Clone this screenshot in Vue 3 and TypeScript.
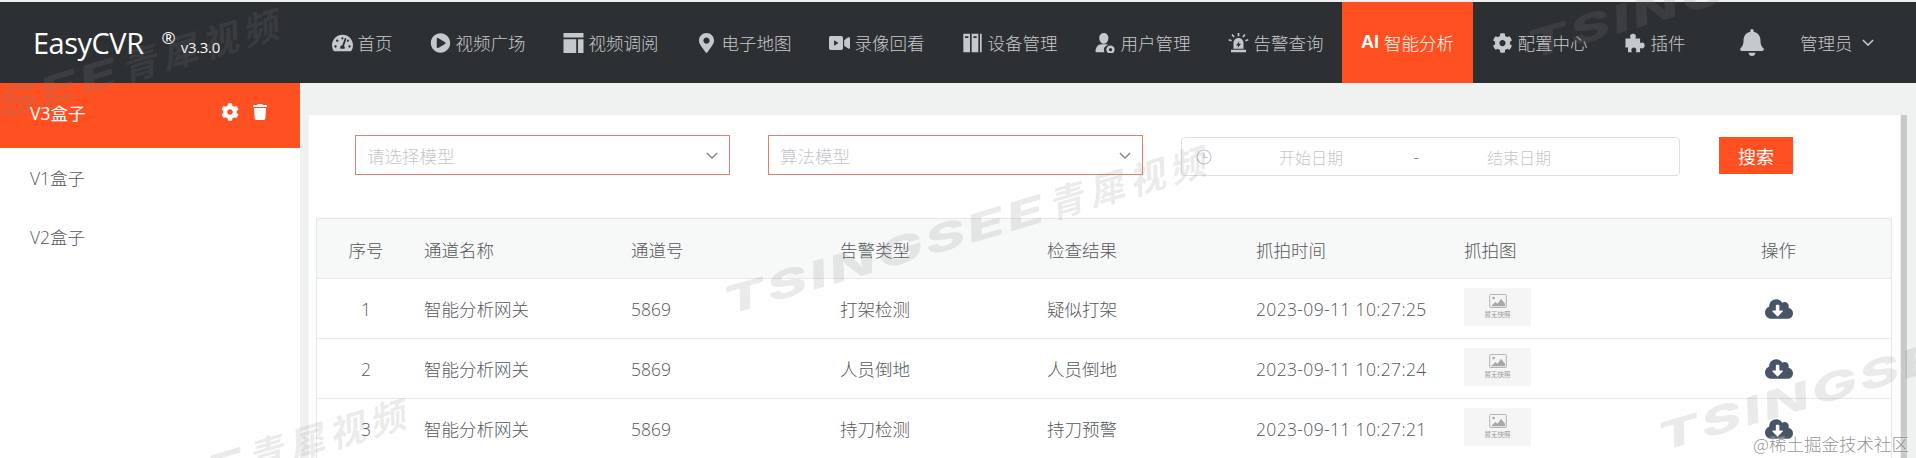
<script setup lang="ts">
interface Glyph {
  box: string
  d: string
}

const icons: Record<string, Glyph> = {
  gauge: {
    box: '0 0 576 512',
    d: 'M288 32C128.94 32 0 160.94 0 320c0 52.8 14.25 102.26 39.06 144.8 5.61 9.62 16.3 15.2 27.44 15.2h443c11.14 0 21.83-5.58 27.44-15.2C561.75 422.26 576 372.8 576 320c0-159.06-128.94-288-288-288zm0 64c14.71 0 26.58 10.13 30.32 23.65-1.11 2.26-2.64 4.23-3.45 6.67l-9.22 27.67c-5.13 3.49-10.97 6.01-17.64 6.01-17.67 0-32-14.33-32-32S270.33 96 288 96zM96 384c-17.67 0-32-14.33-32-32s14.33-32 32-32 32 14.33 32 32-14.33 32-32 32zm48-160c-17.67 0-32-14.33-32-32s14.33-32 32-32 32 14.33 32 32-14.33 32-32 32zm246.77-72.41l-61.33 184C343.13 347.33 352 364.54 352 384c0 11.72-3.38 22.55-8.88 32H232.88c-5.5-9.45-8.88-20.28-8.88-32 0-33.94 26.5-61.43 59.9-63.59l61.34-184.01c4.17-12.56 17.73-19.45 30.36-15.17 12.57 4.19 19.35 17.79 15.17 30.36zm14.66 57.2l15.52-46.55c3.47-1.29 7.13-2.23 11.05-2.23 17.67 0 32 14.33 32 32s-14.33 32-32 32c-11.38-.01-20.89-6.28-26.57-15.22zM480 384c-17.67 0-32-14.33-32-32s14.33-32 32-32 32 14.33 32 32-14.33 32-32 32z'
  },
  play: {
    box: '0 0 512 512',
    d: 'M256 8C119 8 8 119 8 256s111 248 248 248 248-111 248-248S393 8 256 8zm115.7 272l-176 101c-15.8 8.8-35.7-2.5-35.7-21V152c0-18.4 19.8-29.8 35.7-21l176 107c16.4 9.2 16.4 32.9 0 42z'
  },
  layout: {
    box: '1 1 22 22',
    d: 'M1 1h22v5H1zM1 8h14v15H1zM17 8h6v15h-6z'
  },
  marker: {
    box: '0 0 384 512',
    d: 'M172.268 501.67C26.97 291.031 0 269.413 0 192 0 85.961 85.961 0 192 0s192 85.961 192 192c0 77.413-26.97 99.031-172.268 309.67-9.535 13.774-29.93 13.773-39.464 0zM192 272c44.183 0 80-35.817 80-80s-35.817-80-80-80-80 35.817-80 80 35.817 80 80 80z'
  },
  video: {
    box: '0 0 576 512',
    d: 'M336.2 64H47.8C21.4 64 0 85.4 0 111.8v288.4C0 426.6 21.4 448 47.8 448h288.4c26.4 0 47.8-21.4 47.8-47.8V111.8c0-26.4-21.4-47.8-47.8-47.8zM140 180l120 76-120 76zM525.6 101.7L416 177.3v157.4l109.6 75.5c21.2 14.6 50.4-.3 50.4-25.8V127.5c0-25.4-29.1-40.4-50.4-25.8z'
  },
  device: {
    box: '0 0 24 24',
    d: 'M1 1h8v22H1zM3 4v2h4V4zM11 1h8v22h-8zM13 4v2h4V4zM21 1h2v22h-2z'
  },
  user: {
    box: '0 0 24 24',
    d: 'M10 0c3.300 0 5.500 2.600 5.500 6S13.300 13 10 13 4.500 9.400 4.500 6 6.700 0 10 0zM7 13.500h6c1 0 1.800.3 2.500.8-3.300.4-5.500 3-5.500 5.700 0 1.100.3 2.200.9 3H1c-.6 0-1-.4-1-1 0-3 2-8.500 7-8.500zM18 15a5 5 0 1 1 0 10 5 5 0 0 1 0-10zm0 3a2 2 0 1 0 0 4 2 2 0 0 0 0-4z'
  },
  alarm: {
    box: '0 0 24 24',
    d: 'M11 0h2v4h-2zM3.500 2.500l1.500-1.300 2.500 3-1.500 1.300zM20.500 2.500L19 1.200l-2.500 3 1.500 1.300zM0 9l.6-1.900 3.400 1.200-.6 1.900zM24 9l-.6-1.900-3.400 1.200.6 1.900zM12 6c3.500 0 6 2.700 6 6v7H6v-7c0-3.300 2.500-6 6-6zm1 4l-4 5h2.500L11 18l4-5h-2.500zM3 20h18v3H3z'
  },
  cog: {
    box: '0 0 512 512',
    d: 'M487.4 315.7l-42.6-24.6c4.3-23.2 4.3-47 0-70.2l42.6-24.6c4.9-2.8 7.1-8.6 5.5-14-11.1-35.6-30-67.8-54.7-94.6-3.8-4.1-10-5.1-14.8-2.3L380.8 110c-17.9-15.4-38.5-27.3-60.8-35.1V25.8c0-5.6-3.9-10.5-9.4-11.7-36.7-8.2-74.3-7.8-109.2 0-5.5 1.2-9.4 6.1-9.4 11.7V75c-22.2 7.9-42.8 19.8-60.8 35.1L88.7 85.5c-4.9-2.8-11-1.9-14.8 2.3-24.7 26.7-43.6 58.9-54.7 94.6-1.7 5.4.6 11.2 5.5 14L67.3 221c-4.3 23.2-4.3 47 0 70.2l-42.6 24.6c-4.9 2.8-7.1 8.6-5.5 14 11.1 35.6 30 67.8 54.7 94.6 3.8 4.1 10 5.1 14.8 2.3l42.6-24.6c17.9 15.4 38.5 27.3 60.8 35.1v49.2c0 5.6 3.9 10.5 9.4 11.7 36.7 8.2 74.3 7.8 109.2 0 5.5-1.2 9.4-6.1 9.4-11.7v-49.2c22.2-7.9 42.8-19.8 60.8-35.1l42.6 24.6c4.9 2.8 11 1.9 14.8-2.3 24.7-26.7 43.6-58.9 54.7-94.6 1.5-5.5-.7-11.3-5.6-14.1zM256 336c-44.1 0-80-35.9-80-80s35.9-80 80-80 80 35.9 80 80-35.9 80-80 80z'
  },
  puzzle: {
    box: '0 0 24 24',
    d: 'M9 1c2 0 3.500 1.300 3.500 3 0 1-.5 1.600-.5 2.500h5.500V12c.9 0 1.500-.5 2.500-.5 1.700 0 3 1.500 3 3.500s-1.300 3.500-3 3.500c-1 0-1.600-.5-2.500-.5v5h-5c0-.9.500-1.500.5-2.500 0-1.700-1.300-3-3-3s-3 1.300-3 3c0 1 .5 1.600.5 2.500H3v-6c-.9 0-1.500.5-2.500.5S-.5 16 0 15V6.500h6c0-.9-.5-1.500-.5-2.500C5.500 2.300 7 1 9 1z'
  },
  bell: {
    box: '0 0 448 512',
    d: 'M224 512c35.32 0 63.97-28.65 63.97-64H160.03c0 35.35 28.65 64 63.97 64zm215.39-149.71c-19.32-20.76-55.47-51.99-55.47-154.29 0-77.7-54.48-139.9-127.94-155.16V32c0-17.67-14.32-32-31.98-32s-31.98 14.33-31.98 32v20.84C118.56 68.1 64.08 130.3 64.08 208c0 102.3-36.15 133.53-55.47 154.29-6 6.45-8.66 14.16-8.61 21.71.11 16.4 12.98 32 32.1 32h383.8c19.12 0 32-15.6 32.1-32 .05-7.55-2.61-15.27-8.61-21.71z'
  },
  trash: {
    box: '0 0 448 512',
    d: 'M432 32H312l-9.4-18.7A24 24 0 0 0 281.1 0H166.8a23.72 23.72 0 0 0-21.4 13.3L136 32H16A16 16 0 0 0 0 48v32a16 16 0 0 0 16 16h416a16 16 0 0 0 16-16V48a16 16 0 0 0-16-16zM53.2 467a48 48 0 0 0 47.9 45h245.8a48 48 0 0 0 47.9-45L416 128H32z'
  },
  download: {
    box: '0 0 640 512',
    d: 'M537.6 226.6c4.1-10.7 6.4-22.4 6.4-34.6 0-53-43-96-96-96-19.7 0-38.1 6-53.3 16.2C367 64.2 315.3 32 256 32c-88.4 0-160 71.6-160 160 0 2.7.1 5.4.2 8.1C40.2 219.8 0 273.2 0 336c0 79.5 64.5 144 144 144h368c70.7 0 128-57.3 128-128 0-61.9-44-113.6-102.4-125.4zm-132.9 88.7L299.3 420.7c-6.2 6.2-16.4 6.2-22.6 0L171.3 315.3c-10.1-10.1-2.9-27.3 11.3-27.3H248V176c0-8.8 7.2-16 16-16h48c8.8 0 16 7.2 16 16v112h65.4c14.2 0 21.4 17.2 11.3 27.3z'
  }
}

const navItems = [
  { icon: 'gauge', label: '首页' },
  { icon: 'play', label: '视频广场' },
  { icon: 'layout', label: '视频调阅' },
  { icon: 'marker', label: '电子地图' },
  { icon: 'video', label: '录像回看' },
  { icon: 'device', label: '设备管理' },
  { icon: 'user', label: '用户管理' },
  { icon: 'alarm', label: '告警查询' },
  { icon: '', label: '智能分析', active: true },
  { icon: 'cog', label: '配置中心' },
  { icon: 'puzzle', label: '插件' }
]

const boxes = [
  { name: 'V3盒子', active: true },
  { name: 'V1盒子', active: false },
  { name: 'V2盒子', active: false }
]

const columns = ['序号', '通道名称', '通道号', '告警类型', '检查结果', '抓拍时间', '抓拍图', '操作']

const rows = [
  { id: 1, alarm: '打架检测', result: '疑似打架', time: '2023-09-11 10:27:25' },
  { id: 2, alarm: '人员倒地', result: '人员倒地', time: '2023-09-11 10:27:24' },
  { id: 3, alarm: '持刀检测', result: '持刀预警', time: '2023-09-11 10:27:21' }
]

// 斜向水印，每条一个落点
const marks = ['wm-a', 'wm-b', 'wm-c', 'wm-d', 'wm-e']
</script>

<template>
  <div class="page">
    <header class="topbar">
      <div class="brand">
        <span class="brand-name">EasyCVR</span>
        <sup class="brand-reg">®</sup>
        <span class="brand-ver">v3.3.0</span>
      </div>
      <nav class="nav">
        <a v-for="item in navItems" :key="item.label" class="nav-item" :class="{ active: item.active }">
          <b v-if="item.active" class="nav-ai">AI</b>
          <svg v-else class="nav-icon" :viewBox="icons[item.icon].box"><path :d="icons[item.icon].d" fill-rule="evenodd" /></svg>
          <span>{{ item.label }}</span>
        </a>
      </nav>
      <div class="user-area">
        <svg class="bell" :viewBox="icons.bell.box"><path :d="icons.bell.d" /></svg>
        <span class="user-name">管理员</span>
        <svg class="user-arrow" viewBox="0 0 14 8"><path d="M1 1l6 6 6-6" /></svg>
      </div>
    </header>

    <div class="body">
      <aside class="side">
        <div v-for="box in boxes" :key="box.name" class="side-item" :class="{ active: box.active }">
          <span>{{ box.name }}</span>
          <div v-if="box.active" class="side-tools">
            <svg class="tool-cog" :viewBox="icons.cog.box"><path :d="icons.cog.d" /></svg>
            <svg class="tool-trash" :viewBox="icons.trash.box"><path :d="icons.trash.d" /></svg>
          </div>
        </div>
      </aside>

      <main class="main">
        <section class="card">
          <div class="filters">
            <div class="select">
              <span>请选择模型</span>
              <svg class="chevron" viewBox="0 0 14 8"><path d="M1 1l6 6 6-6" /></svg>
            </div>
            <div class="select">
              <span>算法模型</span>
              <svg class="chevron" viewBox="0 0 14 8"><path d="M1 1l6 6 6-6" /></svg>
            </div>
            <div class="dates">
              <svg class="clock" viewBox="0 0 16 16"><circle cx="8" cy="8" r="7" /><path d="M8 4v4.500h3.500" /></svg>
              <span class="date-from">开始日期</span>
              <span class="date-sep">-</span>
              <span class="date-to">结束日期</span>
            </div>
            <button class="search" type="button">搜索</button>
          </div>

          <div class="table">
            <div class="tr th">
              <div v-for="(col, i) in columns" :key="col" class="td" :class="{ center: i === 0 || i === 7 }">{{ col }}</div>
            </div>
            <div v-for="row in rows" :key="row.id" class="tr">
              <div class="td center">{{ row.id }}</div>
              <div class="td">智能分析网关</div>
              <div class="td">5869</div>
              <div class="td">{{ row.alarm }}</div>
              <div class="td">{{ row.result }}</div>
              <div class="td time">{{ row.time }}</div>
              <div class="td">
                <div class="thumb">
                  <svg class="thumb-icon" viewBox="0 0 20 16">
                    <rect x="0.500" y="0.500" width="19" height="15" rx="1" class="thumb-frame" />
                    <circle cx="5" cy="4.500" r="1.500" class="thumb-fill" />
                    <path d="M2 14l5-5 2.500 2 4-5.500L18 11v3z" class="thumb-fill" />
                  </svg>
                  <span class="thumb-text">暂无快照</span>
                </div>
              </div>
              <div class="td center">
                <svg class="download" :viewBox="icons.download.box"><path :d="icons.download.d" /></svg>
              </div>
            </div>
          </div>
        </section>
        <div class="scrollbar"></div>
      </main>
    </div>

    <div class="watermarks">
      <span v-for="m in marks" :key="m" class="wm" :class="m">
        <span class="wm-latin"><span class="wm-stretch">TSINGSEE</span></span>青犀视频
      </span>
    </div>
    <span class="credit">@稀土掘金技术社区</span>
  </div>
</template>

<style>
html,
body {
  margin: 0;
  background: #f0f1f1;
}
</style>

<style scoped>
.page {
  position: relative;
  width: 1916px;
  height: 458px;
  overflow: hidden;
  padding-top: 2px;
  box-sizing: border-box;
  background: #f0f1f1;
  color: #55585c;
  font-family: "Open Sans", "Noto Sans CJK SC", sans-serif;
  font-size: 17.500px;
  font-weight: 300;
}

.topbar {
  display: flex;
  align-items: center;
  height: 81px;
  background: #2d3033;
  color: #c6c9cb;
}

.brand {
  display: flex;
  align-items: center;
  width: 313px;
  padding-left: 33px;
  box-sizing: border-box;
  color: #fff;
  font-weight: 400;
}
.brand-name {
  font-size: 29px;
  letter-spacing: -0.500px;
}
.brand-reg {
  margin-left: 18px;
  font-size: 17px;
  transform: translateY(-5px);
}
.brand-ver {
  margin-left: 5px;
  font-size: 15px;
  letter-spacing: -0.300px;
  transform: translateY(4px);
}

.nav {
  display: flex;
  align-items: stretch;
  height: 100%;
}
.nav-item {
  display: flex;
  align-items: center;
  gap: 5px;
  padding: 0 18.500px;
  white-space: nowrap;
}
.nav-item.active {
  padding: 0 19px;
  background: #ff5022;
  color: #fff;
}
.nav-icon {
  height: 20px;
  width: 21px;
  fill: #c6c9cb;
}
.nav-ai {
  font-family: "Liberation Sans", sans-serif;
  font-weight: 700;
  font-size: 18px;
}

.user-area {
  display: flex;
  align-items: center;
  margin-left: 36px;
}
.bell {
  width: 24px;
  height: 27px;
  fill: #c6c9cb;
}
.user-name {
  margin-left: 36px;
}
.user-arrow {
  width: 12px;
  height: 7px;
  margin-left: 9px;
  fill: none;
  stroke: #c6c9cb;
  stroke-width: 1.800;
}

.body {
  display: flex;
  height: 375px;
}

.side {
  flex: none;
  width: 300px;
  background: #fff;
}
.side-item {
  display: flex;
  align-items: center;
  justify-content: space-between;
  height: 59px;
  padding: 0 33px 0 30px;
}
.side-item.active {
  height: 58px;
  padding-bottom: 7px;
  background: #ff5022;
  color: #fff;
  font-weight: 400;
}
.side-tools {
  display: flex;
  align-items: center;
  gap: 14px;
}
.tool-cog {
  width: 18px;
  height: 18px;
  fill: #fff;
}
.tool-trash {
  width: 14px;
  height: 18px;
  fill: #fff;
}

.main {
  flex: 1;
  display: flex;
  gap: 1px;
  padding: 32px 9px 0;
  min-width: 0;
}

.card {
  flex: 1;
  min-width: 0;
  padding: 20px 8px 0 7px;
  background: #fff;
}
.scrollbar {
  flex: none;
  width: 6px;
  background: #c9c9c9;
}

.filters {
  display: flex;
  align-items: flex-start;
  height: 40px;
  padding-left: 39px;
  margin-bottom: 43px;
}
.select {
  display: flex;
  align-items: center;
  justify-content: space-between;
  width: 375px;
  height: 40px;
  margin-right: 38px;
  padding: 0 11px;
  box-sizing: border-box;
  border: 1px solid #e3806a;
  color: #c4c6ca;
}
.chevron {
  width: 12px;
  height: 7px;
  fill: none;
  stroke: #7f8388;
  stroke-width: 1.500;
}
.dates {
  display: flex;
  align-items: center;
  flex: none;
  width: 499px;
  height: 39px;
  margin-top: 2px;
  box-sizing: border-box;
  padding-left: 14px;
  border: 1px solid #dcdfe6;
  border-radius: 4px;
  color: #c4c6ca;
  font-size: 16px;
}
.clock {
  flex: none;
  width: 16px;
  height: 16px;
  fill: none;
  stroke: #c0c4cc;
  stroke-width: 1.200;
}
.date-from {
  width: 198px;
  text-align: center;
}
.date-sep {
  width: 12px;
  text-align: center;
  color: #606266;
}
.date-to {
  width: 194px;
  text-align: center;
}
.search {
  flex: none;
  width: 74px;
  height: 37px;
  margin: 2px 0 0 39px;
  padding: 0;
  border: 0;
  background: #ff5022;
  color: #fff;
  font: inherit;
  font-weight: 400;
  font-size: 18px;
}

.table {
  border: 1px solid #e4e7ed;
  border-bottom: 0;
}
.tr {
  display: grid;
  grid-template-columns: 98px 207px 209px 207px 209px 208px 211px 1fr;
  height: 59px;
  border-bottom: 1px solid #e4e7ed;
  align-items: center;
}
.th {
  background: #f7f8f8;
}
.th .td {
  padding-top: 2px;
}
.td {
  padding-left: 9px;
  white-space: nowrap;
}
.td.center {
  padding-left: 0;
  text-align: center;
}
.td.time {
  letter-spacing: 0.350px;
}

.thumb {
  display: flex;
  flex-direction: column;
  align-items: center;
  gap: 2px;
  width: 67px;
  height: 38px;
  margin-bottom: 4px;
  padding-top: 6px;
  box-sizing: border-box;
  background: #f5f5f5;
}
.thumb-icon {
  width: 18px;
  height: 14px;
}
.thumb-frame {
  fill: #f5f5f5;
  stroke: #a8a8a8;
}
.thumb-fill {
  fill: #a8a8a8;
}
.thumb-text {
  font-size: 6.500px;
  line-height: 9px;
  font-weight: 400;
  color: #9a9a9a;
}
.download {
  display: block;
  width: 28px;
  height: 24px;
  margin: 0 auto;
  fill: #4a5468;
}

.watermarks {
  position: absolute;
  inset: 0;
  pointer-events: none;
}
.wm {
  position: absolute;
  font-family: "Noto Sans CJK SC", sans-serif;
  font-size: 36px;
  font-weight: 700;
  font-style: italic;
  letter-spacing: 6px;
  line-height: 42px;
  white-space: nowrap;
  color: rgba(128, 128, 128, 0.17);
  transform: rotate(-16.500deg);
  transform-origin: left bottom;
}
.wm-latin {
  display: inline-block;
  width: 338px;
}
.wm-stretch {
  display: inline-block;
  font-family: "Inter", sans-serif;
  font-size: 38px;
  font-weight: 800;
  letter-spacing: 2px;
  transform: scaleX(1.62);
  transform-origin: left center;
}
.wm-a { left: -197px; top: 141px; }
.wm-b { left: 730px; top: 278px; }
.wm-c { left: 1533px; top: 22px; }
.wm-d { left: 1664px; top: 414px; }
.wm-e { left: -70px; top: 531px; }

.credit {
  position: absolute;
  right: 7px;
  bottom: 2px;
  font-family: "Noto Sans CJK SC", sans-serif;
  font-size: 17.500px;
  color: rgba(110, 110, 110, 0.75);
  text-shadow: 0 0 2px #fff;
}
</style>
